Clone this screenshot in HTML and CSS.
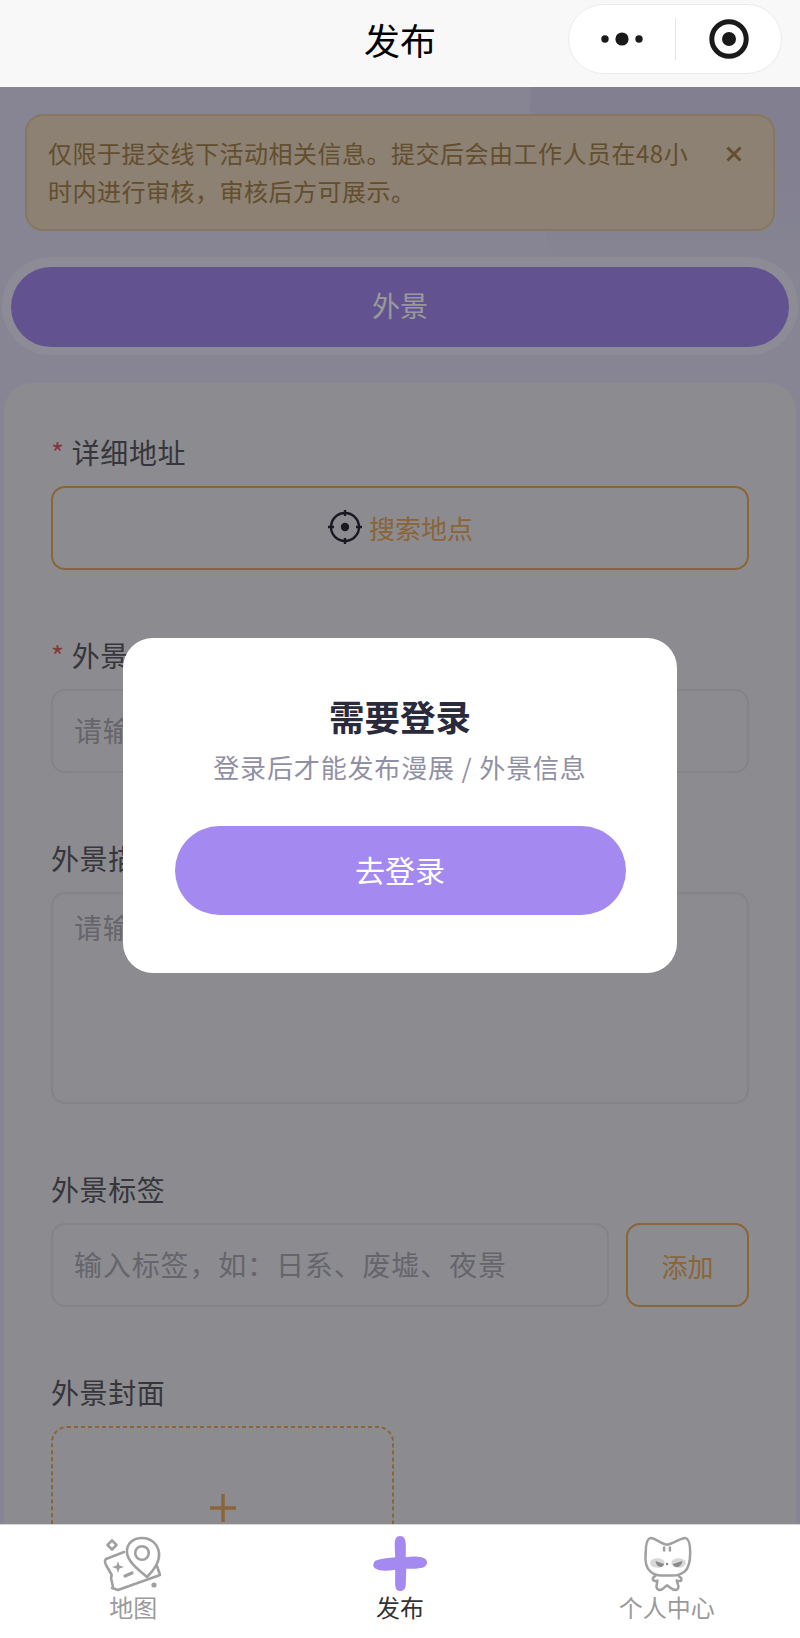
FILE: index.html
```html
<!DOCTYPE html>
<html lang="zh-CN">
<head>
<meta charset="utf-8">
<title>发布</title>
<link rel="stylesheet" href="styles.css">
</head>
<body>
<div class="app">
  <header class="nav">
    <h1 class="nav-title">发布</h1>
    <div class="capsule">
      <div class="capsule-cell">
        <svg class="capsule-dots" viewBox="0 0 48 14" width="48" height="14"><circle cx="7" cy="7" r="3.7"/><circle cx="24" cy="7" r="6.6"/><circle cx="41" cy="7" r="3.7"/></svg>
      </div>
      <span class="capsule-divider"></span>
      <div class="capsule-cell">
        <svg class="capsule-target" viewBox="0 0 40 40" width="40" height="40"><circle class="target-ring" cx="20" cy="20" r="17.2"/><circle cx="20" cy="20" r="7"/></svg>
      </div>
    </div>
  </header>

  <main class="main">
    <div class="page">
      <div class="blob"></div>
      <section class="notice">
        <p class="notice-text">仅限于提交线下活动相关信息。提交后会由工作人员在48小时内进行审核，审核后方可展示。</p>
        <svg class="notice-close" viewBox="0 0 16 16" width="16" height="16"><path d="M1.500 1.500 L14.500 14.500 M14.500 1.500 L1.500 14.500"/></svg>
      </section>
      <div class="tabs"><div class="tab-active">外景</div></div>
      <form class="card">
        <div class="field">
          <label class="label"><span class="star">*</span>详细地址</label>
          <div class="box box-accent box-search">
            <svg class="locate" viewBox="0 0 36 36" width="36" height="36"><circle class="locate-ring" cx="18" cy="18" r="14"/><path class="locate-tick" d="M18 1 V7 M18 29 V35 M1 18 H7 M29 18 H35"/><circle cx="18" cy="18" r="4.2"/></svg>
            <span>搜索地点</span>
          </div>
        </div>
        <div class="field">
          <label class="label"><span class="star">*</span>外景名称</label>
          <div class="box box-input"><span class="placeholder">请输入外景名称</span></div>
        </div>
        <div class="field">
          <label class="label">外景描述</label>
          <div class="box box-textarea"><span class="placeholder">请输入外景描述</span></div>
        </div>
        <div class="field">
          <label class="label">外景标签</label>
          <div class="tag-row">
            <div class="box box-input box-grow"><span class="placeholder">输入标签，如：日系、废墟、夜景</span></div>
            <div class="box box-accent box-add">添加</div>
          </div>
        </div>
        <div class="field">
          <label class="label">外景封面</label>
          <div class="upload">
            <svg class="upload-border" viewBox="0 0 343 343" width="343" height="343"><rect x="1" y="1" width="341" height="341" rx="15" ry="15"/></svg>
            <svg class="upload-plus" viewBox="0 0 28 28" width="28" height="28"><path d="M14 0 V28 M1 14 H27"/></svg>
          </div>
        </div>
      </form>
    </div>

    <div class="mask">
      <div class="modal">
        <h2 class="modal-title">需要登录</h2>
        <p class="modal-sub">登录后才能发布漫展 / 外景信息</p>
        <button class="modal-btn" type="button">去登录</button>
      </div>
    </div>
  </main>

  <nav class="tabbar">
    <div class="tabbar-item">
      <svg class="tab-icon" viewBox="23 15 62 58" width="62" height="58">
        <g class="line">
          <path d="M27 39 L45 32 M33 68 L39 70 L81 55 L78 46 M27 39 C25 41 26 43 27 45 L31 52 C33 54 33 56 32 58 L34 67"/>
          <path d="M68 57 C60 50 49 42 48 33 C47 23 55 18 63 18 C72 18 79 24 80 33 C81 42 75 50 68 57 Z"/>
          <circle cx="63" cy="33" r="6.8"/>
          <path d="M33 20.5 L37.5 25 L33 29.5 L28.5 25 Z"/>
          <path class="thick" d="M46 56 L53 53"/>
        </g>
        <path class="solid" d="M39 41 L40.5 45.5 L45 47 L40.5 48.5 L39 53 L37.5 48.5 L33 47 L37.5 45.5 Z"/>
        <circle class="solid" cx="75" cy="65" r="2.6"/>
      </svg>
      <span class="tab-text">地图</span>
    </div>
    <div class="tabbar-item tabbar-item-on">
      <svg class="tab-icon" viewBox="31 14 58 60" width="58" height="60">
        <path class="plus" d="M60 15 C64 15 66 18 66 24 L66 37 C72 36 80 36 85 38 C89 40 89 45 85 47 C80 49 72 49 66.5 49 L66 64 C66 70 64 72 60 72 C56 72 55 69 55 64 L55 50 C48 51 40 52 35 49 C31 47 32 41 36 40 C42 38 49 38 55 37 L54.500 24 C54.500 18 56 15 60 15 Z"/>
      </svg>
      <span class="tab-text">发布</span>
    </div>
    <div class="tabbar-item">
      <svg class="tab-icon" viewBox="36 14 60 60" width="60" height="60">
        <g class="line">
          <path d="M49 17 C54 17 59 23 66 24 C73 23 80 17 85 17 C89 18 90 24 90 32 C90 41 89 48 84 52 C80 55 76 56 72 56 L60 56 C56 56 52 55 49 52 C44 48 43 41 44 32 C44 24 45 18 49 17 Z"/>
          <path d="M54 56 C52 58 50 59 52 61 C54 62 56 62 56 61 C56 65 53 69 58 71 C62 71 63 68 66 66 C69 68 71 71 75 71 C80 69 77 65 76 61 C78 62 81 62 81 60 C81 58 79 58 78 56"/>
        </g>
        <ellipse class="shade" cx="56" cy="43" rx="7.500" ry="5"/>
        <ellipse class="shade" cx="78" cy="43" rx="7.500" ry="5"/>
        <path class="eye" d="M54 41 L63 44 C62 48 57 48 55 44 Z M82 41 L72 44 C73 48 79 48 81 44 Z"/>
        <circle class="eye" cx="66" cy="44" r="1.300"/>
        <path class="whisker" d="M63 27 V30 M69 27 V30"/>
      </svg>
      <span class="tab-text">个人中心</span>
    </div>
  </nav>
</div>
</body>
</html>
```

FILE: styles.css
```css
* {
  box-sizing: border-box;
}

html,
body {
  margin: 0;
  padding: 0;
}

body {
  font-family: "Noto Sans CJK SC", "Noto Sans", sans-serif;
  color: #1a1a2e;
}

.app {
  width: 800px;
  height: 1638px;
  display: flex;
  flex-direction: column;
  overflow: hidden;
}

/* navigation bar */
.nav {
  flex: 0 0 87px;
  position: relative;
  display: flex;
  align-items: center;
  justify-content: center;
  padding-bottom: 9px;
  background: #f8f8f8;
}

.nav-title {
  margin: 0;
  font-size: 36px;
  font-weight: 400;
  line-height: 1;
  color: #000;
}

.capsule {
  position: absolute;
  top: 4px;
  right: 18px;
  width: 214px;
  height: 70px;
  display: flex;
  align-items: center;
  background: #fff;
  border: 1px solid #ebebeb;
  border-radius: 35px;
}

.capsule-cell {
  flex: 1;
  display: flex;
  align-items: center;
  justify-content: center;
}

.capsule-divider {
  flex: 0 0 1px;
  height: 42px;
  background: #e4e4e4;
}

.capsule-dots,
.capsule-target {
  fill: #1a1a1a;
}

.capsule-target {
  margin-left: 2px;
}

.target-ring {
  fill: none;
  stroke: #1a1a1a;
  stroke-width: 5;
}

/* main area */
.main {
  flex: 1;
  position: relative;
  overflow: hidden;
}

.page {
  position: relative;
  height: 100%;
  background: #e1def5;
  overflow: hidden;
}

.blob {
  position: absolute;
  top: -300px;
  left: 529px;
  width: 680px;
  height: 680px;
  border-radius: 50%;
  background: linear-gradient(180deg, #d9d5f1 0%, #d9d5f1 55%, #e1def5 72%);
}

.notice {
  position: relative;
  margin: 27px 25px 0;
  height: 117px;
  padding: 18px 22px 0 21px;
  display: flex;
  align-items: flex-start;
  justify-content: space-between;
  background: #e9d7be;
  border: 2px solid #e0c9a0;
  border-radius: 18px;
}

.notice-text {
  margin: 0;
  width: 642px;
  font-size: 24px;
  line-height: 38px;
  letter-spacing: 0.5px;
  color: #a5824e;
}

.notice-close {
  flex: none;
  margin: 12px 9px 0 0;
  fill: none;
  stroke: #a5824e;
  stroke-width: 3;
}

.tabs {
  position: relative;
  margin: 26px 2px 0;
  height: 98px;
  padding: 10px 9px;
  background: #ebe9fa;
  border-radius: 49px;
}

.tab-active {
  height: 80px;
  display: flex;
  align-items: center;
  justify-content: center;
  padding-bottom: 4px;
  font-size: 28px;
  color: #fff;
  background: #a48af0;
  border-radius: 40px;
}

.card {
  position: relative;
  margin: 28px 4px 0;
  height: 1400px;
  padding: 49px 47px 0;
  background: #e9e8f0;
  border-radius: 28px;
}

.field {
  margin-bottom: 65px;
}

.label {
  display: flex;
  align-items: center;
  height: 40px;
  margin-bottom: 14px;
  font-size: 28px;
  line-height: 40px;
  letter-spacing: 0.6px;
  color: #5a5a64;
}

.star {
  margin-right: 7px;
  color: #e06060;
}

.box {
  display: flex;
  align-items: center;
  height: 84px;
  border-radius: 14px;
}

.box-accent {
  justify-content: center;
  border: 2px solid #e6a85c;
  font-size: 26px;
  color: #e6a85c;
}

.box-search {
  gap: 6px;
  padding-bottom: 2px;
}

.box-input,
.box-textarea {
  padding: 0 21px 3px;
  background: #e9e8f0;
  border: 2px solid #dcdbe3;
}

.box-textarea {
  height: 212px;
  align-items: flex-start;
  padding-top: 13px;
}

.placeholder {
  font-size: 28px;
  line-height: 40px;
  letter-spacing: 0.85px;
  color: #a9a9b3;
  white-space: nowrap;
}

.tag-row {
  display: flex;
  gap: 17px;
}

.box-grow {
  flex: 1;
}

.box-add {
  flex: 0 0 123px;
}

.locate {
  fill: #2a2a3c;
}

.locate-ring,
.locate-tick {
  fill: none;
  stroke: #2a2a3c;
  stroke-width: 2.4;
}

.upload {
  position: relative;
  width: 343px;
  height: 343px;
  display: flex;
  justify-content: center;
  padding-top: 68px;
}

.upload-border {
  position: absolute;
  inset: 0;
  fill: none;
  stroke: #e6a85c;
  stroke-width: 2;
  stroke-dasharray: 4 3;
}

.upload-plus {
  fill: none;
  stroke: #e6a85c;
  stroke-width: 3.4;
}

/* login mask */
.mask {
  position: absolute;
  inset: 0;
  display: flex;
  align-items: center;
  justify-content: center;
  background: rgba(0, 0, 0, 0.4);
}

.modal {
  width: 554px;
  height: 335px;
  display: flex;
  flex-direction: column;
  align-items: center;
  padding-top: 53px;
  background: #fff;
  border-radius: 30px;
}

.modal-title {
  margin: 0;
  font-size: 35.5px;
  font-weight: 700;
  line-height: 50px;
  color: #2a2a3c;
}

.modal-sub {
  margin: 7px 0 0;
  font-size: 26px;
  line-height: 38px;
  letter-spacing: 0.85px;
  color: #9090a5;
}

.modal-btn {
  margin-top: 40px;
  width: 451px;
  height: 89px;
  padding: 0 0 4px;
  border: 0;
  border-radius: 45px;
  background: #a48af0;
  font-family: inherit;
  font-size: 30px;
  color: #fff;
}

/* tab bar */
.tabbar {
  flex: 0 0 114px;
  position: relative;
  display: flex;
  background: #fff;
  border-top: 1px solid #d4d4d4;
}

.tabbar-item {
  flex: 1;
  display: flex;
  flex-direction: column;
  align-items: center;
  padding-top: 10px;
}

.tab-icon {
  display: block;
  height: 58px;
}

.tab-text {
  font-size: 24px;
  line-height: 30px;
  margin-top: -1px;
  color: #9a9a9a;
}

.tabbar-item-on .tab-text {
  color: #333;
}

.line,
.whisker {
  fill: none;
  stroke: #a0a0a0;
  stroke-width: 2.6;
  stroke-linecap: round;
  stroke-linejoin: round;
}

.thick {
  stroke-width: 3.2;
}

.solid {
  fill: #a0a0a0;
}

.plus {
  fill: #a48af0;
}

.shade {
  fill: #d8d8d8;
}

.eye {
  fill: #8a8a8a;
}
```
